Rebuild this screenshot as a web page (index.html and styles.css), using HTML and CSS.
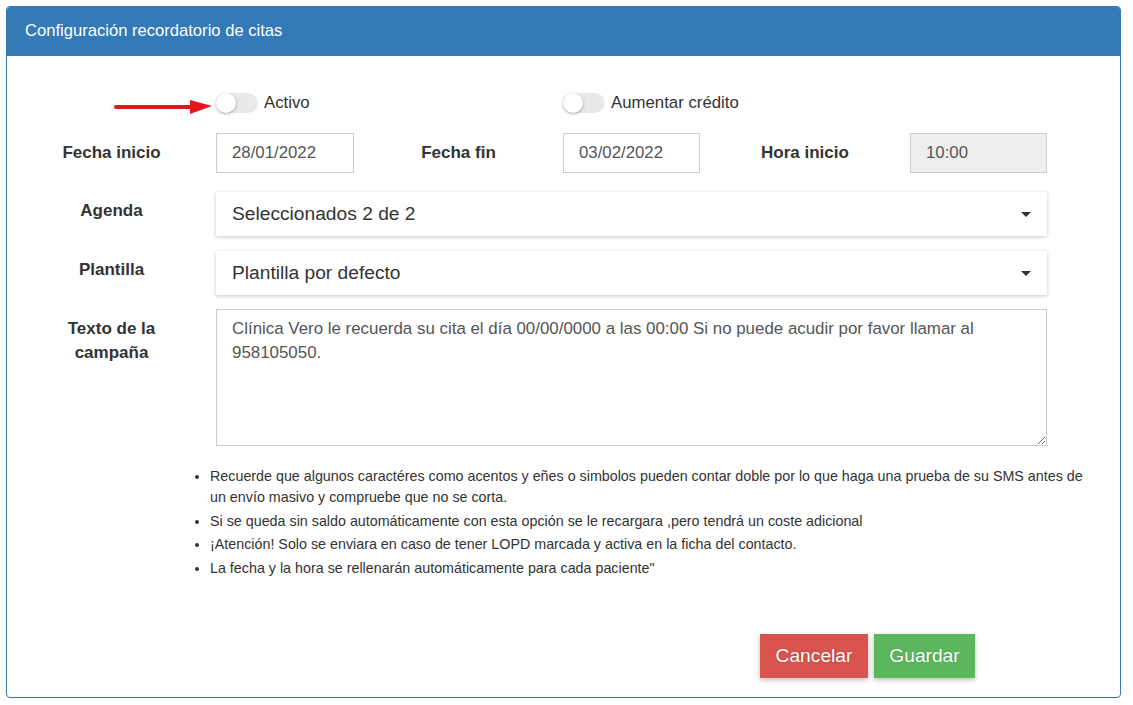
FILE: index.html
```html
<!DOCTYPE html>
<html lang="es">
<head>
<meta charset="utf-8">
<title>Configuración recordatorio de citas</title>
<link rel="stylesheet" href="styles.css">
</head>
<body>
<div class="panel">
  <div class="panel-heading">Configuración recordatorio de citas</div>
  <div class="panel-body">
    <div class="grid toggles">
      <div class="arrow-cell">
        <svg class="arrow" width="100" height="16" viewBox="0 0 100 16">
          <line x1="2" y1="8" x2="80" y2="8" stroke="#e8141b" stroke-width="4" stroke-linecap="round"/>
          <polygon points="76,1 98,7 76,15" fill="#e8141b"/>
        </svg>
      </div>
      <label class="switch-wrap c2"><span class="switch"><span class="knob"></span></span><span class="switch-label">Activo</span></label>
      <div></div>
      <label class="switch-wrap c4"><span class="switch"><span class="knob"></span></span><span class="switch-label">Aumentar crédito</span></label>
    </div>

    <div class="grid dates">
      <div class="lbl">Fecha inicio</div>
      <div class="input">28/01/2022</div>
      <div class="lbl">Fecha fin</div>
      <div class="input">03/02/2022</div>
      <div class="lbl">Hora inicio</div>
      <div class="input disabled">10:00</div>
    </div>

    <div class="wide-row sel-row first">
      <div class="lbl">Agenda</div>
      <div class="select"><span>Seleccionados 2 de 2</span><span class="caret"></span></div>
    </div>

    <div class="wide-row sel-row second">
      <div class="lbl">Plantilla</div>
      <div class="select"><span>Plantilla por defecto</span><span class="caret"></span></div>
    </div>

    <div class="wide-row text-row">
      <div class="lbl lbl-top">Texto de la<br>campaña</div>
      <textarea class="textarea" readonly>Clínica Vero le recuerda su cita el día 00/00/0000 a las 00:00 Si no puede acudir por favor llamar al 958105050.</textarea>
    </div>

    <ul class="notes">
      <li>Recuerde que algunos caractéres como acentos y eñes o simbolos pueden contar doble por lo que haga una prueba de su SMS antes de un envío masivo y compruebe que no se corta.</li>
      <li>Si se queda sin saldo automáticamente con esta opción se le recargara ,pero tendrá un coste adicional</li>
      <li>¡Atención! Solo se enviara en caso de tener LOPD marcada y activa en la ficha del contacto.</li>
      <li>La fecha y la hora se rellenarán automáticamente para cada paciente"</li>
    </ul>

    <div class="actions">
      <button class="btn btn-cancel">Cancelar</button>
      <button class="btn btn-save">Guardar</button>
    </div>
  </div>
</div>
</body>
</html>
```

FILE: styles.css
```css
* { box-sizing: border-box; }
html, body { margin: 0; padding: 0; background: #fff; }
body {
  font-family: "Liberation Sans", Arial, sans-serif;
  color: #333;
  padding: 6px 0 0 6px;
}
.panel {
  width: 1115px;
  height: 692px;
  border: 1px solid #3a77ad;
  border-radius: 4px;
  overflow: hidden;
  background: #fff;
}
.panel-heading {
  background: #337ab7;
  color: #fff;
  font-size: 16.6px;
  height: 49px;
  line-height: 48px;
  padding-left: 18px;
}
.panel-body { padding: 0; }

.grid {
  display: grid;
  grid-template-columns: 209px 138px 209px 137px 210px 137px;
  align-items: center;
}
.toggles { margin-top: 35px; height: 20px; }
.arrow-cell { display: flex; justify-content: flex-end; padding-right: 2px; }
.arrow { display: block; margin-top: 8px; }
.switch-wrap {
  display: flex;
  align-items: center;
  white-space: nowrap;
  font-size: 16.8px;
  color: #333;
}
.switch {
  width: 42px;
  height: 20px;
  border-radius: 10px;
  background: #e9e9e9;
  position: relative;
  flex: none;
}
.knob {
  position: absolute;
  left: 0;
  top: 0;
  width: 20px;
  height: 20px;
  border-radius: 50%;
  background: #fff;
  box-shadow: 0 1px 3px rgba(0,0,0,0.35);
}
.switch-label { margin-left: 6px; }

.dates { margin-top: 22px; }
.lbl {
  text-align: center;
  font-weight: bold;
  font-size: 17px;
  color: #333;
}
.input {
  height: 40px;
  border: 1px solid #ccc;
  padding-left: 15px;
  line-height: 38px;
  font-size: 16.8px;
  color: #555;
}
.input.disabled { background: #eee; }

.wide-row {
  display: grid;
  grid-template-columns: 209px 831px;
  align-items: center;
}
.sel-row.first { margin-top: 19px; }
.sel-row.second { margin-top: 15px; }
.sel-row .lbl { margin-top: -6px; }
.select {
  height: 44px;
  display: flex;
  align-items: center;
  justify-content: space-between;
  padding: 0 16px 0 16px;
  font-size: 19.2px;
  color: #333;
  background: #fff;
  box-shadow: 0 1px 4px rgba(0,0,0,0.22);
}
.caret {
  width: 0;
  height: 0;
  border-left: 5px solid transparent;
  border-right: 5px solid transparent;
  border-top: 5px solid #333;
}

.text-row { margin-top: 14px; align-items: start; }
.lbl-top { line-height: 24px; padding-top: 8px; }
.textarea {
  display: block;
  width: 831px;
  height: 137px;
  border: 1px solid #ccc;
  padding: 7px 15px;
  font-family: "Liberation Sans", Arial, sans-serif;
  font-size: 16.9px;
  line-height: 24px;
  color: #555;
  resize: vertical;
  margin: 0;
  outline: none;
}

.notes {
  margin: 20px 0 0 0;
  padding: 0 0 0 203px;
  width: 1090px;
  font-size: 14.3px;
  line-height: 21px;
  color: #333;
}
.notes li { margin-bottom: 2.5px; }

.actions {
  display: flex;
  gap: 6px;
  padding-left: 753px;
  margin-top: 55px;
}
.btn {
  height: 44px;
  border: none;
  border-radius: 0;
  color: #fff;
  font-family: "Liberation Sans", Arial, sans-serif;
  font-size: 19.2px;
  padding: 0;
  box-shadow: 0 2px 5px rgba(0,0,0,0.25);
  text-shadow: 0 0 2px rgba(0,0,0,0.25);
}
.btn-cancel { background: #d9534f; width: 108px; }
.btn-save { background: #5cb85c; width: 101px; }
```
